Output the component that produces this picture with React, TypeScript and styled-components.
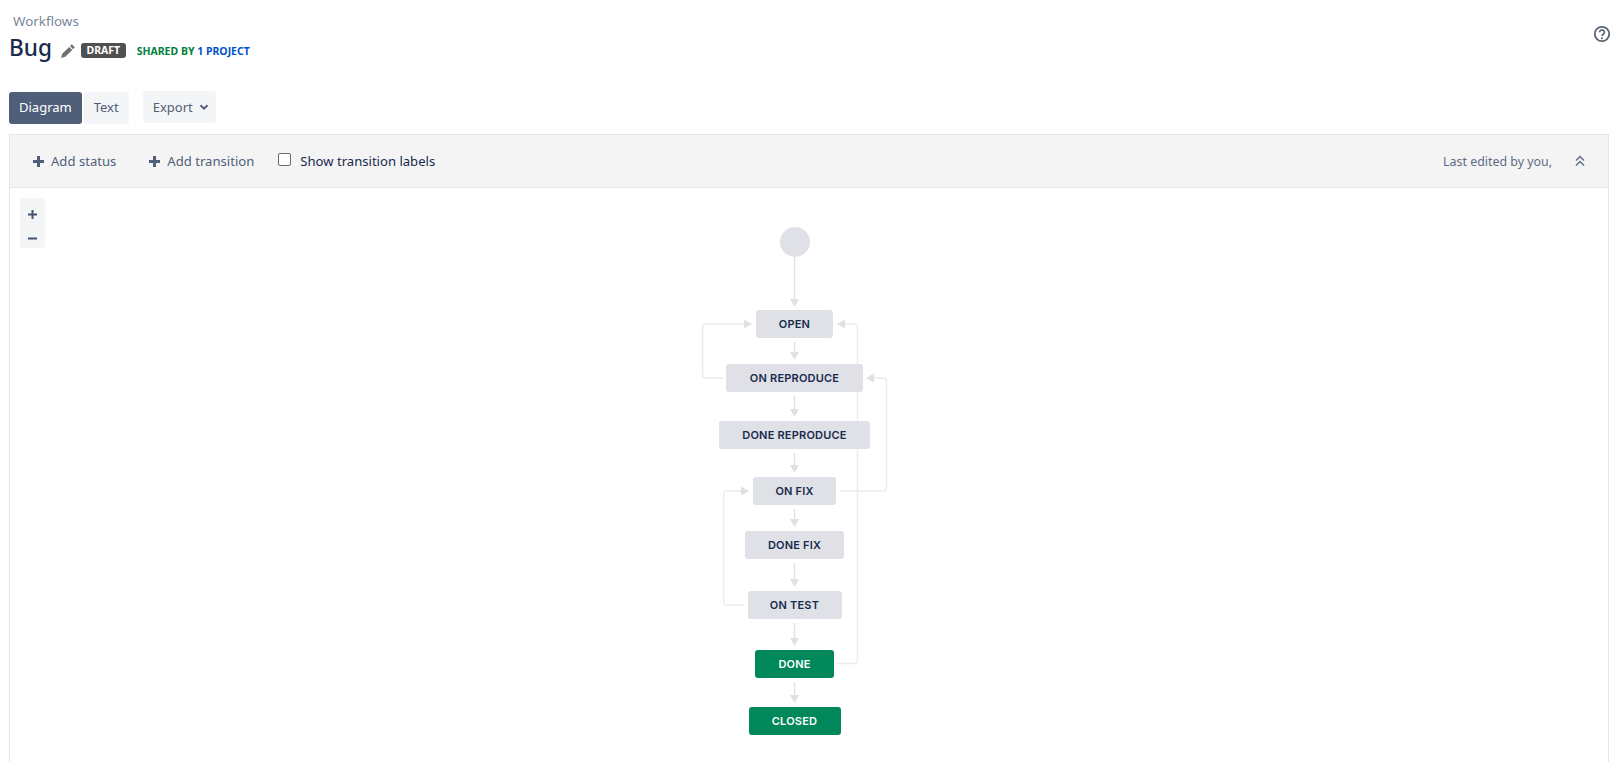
import React from "react";
import styled, { createGlobalStyle } from "styled-components";

const Global = createGlobalStyle`
  html, body { margin: 0; padding: 0; background: #fff; overflow: hidden; }
  body { font-family: "Noto Sans", "Open Sans", sans-serif; font-size: 13px; color: #172b4d; }
`;

const Page = styled.div`
  height: 762px;
  overflow: hidden;
  display: flex;
  flex-direction: column;
  padding: 0 11px 0 9px;
  box-sizing: border-box;
`;

const Header = styled.header`
  display: flex;
  justify-content: space-between;
  height: 91px;
`;

const Crumb = styled.div`
  font-size: 13.4px;
  line-height: 18px;
  color: #7a869a;
  padding: 12px 0 0 4px;
`;

const TitleRow = styled.div`
  display: flex;
  align-items: center;
  height: 30px;
  margin-top: 3px;
`;

const Title = styled.h1`
  margin: 0;
  font-size: 22.6px;
  line-height: 30px;
  font-weight: 500;
  color: #172b4d;
`;

const EditIcon = styled.svg`
  width: 14px;
  height: 14px;
  margin: 6px 0 0 9px;
  fill: #707070;
`;

const Draft = styled.span`
  margin: 5px 0 0 6px;
  height: 15px;
  padding: 0 5.500px;
  border-radius: 3px;
  background: #505050;
  color: #fff;
  font-size: 10.5px;
  font-weight: 700;
  line-height: 15px;
`;

const Shared = styled.span`
  margin: 5px 0 0 11px;
  font-size: 10.5px;
  font-weight: 700;
  color: #00803a;
`;

const Projects = styled.span`
  color: #0052cc;
`;

const Help = styled.svg`
  width: 18px;
  height: 18px;
  margin: 25px 0 0 0;
  position: relative;
  left: 2px;
  fill: none;
  stroke: #5a6472;
`;

const Tabs = styled.nav`
  display: flex;
  align-items: flex-start;
  height: 43px;
`;

const Tab = styled.button<{ $active?: boolean }>`
  height: 32px;
  margin-top: 1px;
  margin-right: 2px;
  padding: 0 10px 2px;
  border: 0;
  border-radius: 3px;
  font: 13px "Noto Sans", sans-serif;
  background: ${(p) => (p.$active ? "#505f79" : "#f4f5f7")};
  color: ${(p) => (p.$active ? "#ffffff" : "#505f79")};
`;

const Export = styled.button`
  display: flex;
  align-items: center;
  gap: 6px;
  height: 32px;
  margin-left: 12px;
  padding: 0 7px 0 10px;
  border: 0;
  border-radius: 3px;
  font: 13px "Noto Sans", sans-serif;
  background: #f4f5f7;
  color: #505f79;
`;

const Panel = styled.section`
  flex: 1;
  border: 1px solid #e6e6e6;
  border-bottom: 0;
  display: flex;
  flex-direction: column;
`;

const Toolbar = styled.div`
  height: 52px;
  flex: none;
  display: flex;
  align-items: center;
  background: #f4f4f5;
  border-bottom: 1px solid #e6e6e6;
  padding: 0 22px 0 23px;
  font-size: 13.1px;
`;

const ToolAction = styled.span`
  display: flex;
  align-items: center;
  gap: 7px;
  color: #505f79;
  margin-right: 33px;
`;

const Check = styled.label`
  display: flex;
  align-items: center;
  gap: 9px;
  margin-left: -9px;
  color: #172b4d;
`;

const CheckBox = styled.span`
  width: 11px;
  height: 11px;
  border: 1px solid #6b6b6b;
  border-radius: 2px;
  background: #fff;
  margin-top: -3px;
`;

const Edited = styled.span`
  margin-left: auto;
  color: #5e6c84;
  font-size: 12.4px;
`;

const Collapse = styled.span`
  display: flex;
  margin-left: 22px;
  color: #5e6c84;
`;

const Canvas = styled.div`
  position: relative;
  flex: 1;
`;

const Zoom = styled.div`
  position: absolute;
  left: 10px;
  top: 10px;
  width: 25px;
  height: 50px;
  box-sizing: border-box;
  padding-top: 4px;
  border-radius: 3px;
  background: #f4f5f7;
  display: grid;
  grid-template-rows: 24px 24px;
  place-items: center;
  color: #42526e;
`;

const Wires = styled.svg`
  position: absolute;
  left: -10px;
  top: -188px;
  width: 1620px;
  height: 762px;
`;

const Start = styled.div`
  position: absolute;
  width: 30px;
  height: 30px;
  border-radius: 50%;
  background: #dfe1e6;
`;

const Node = styled.div<{ $done?: boolean }>`
  position: absolute;
  height: 28px;
  box-sizing: border-box;
  border-radius: 3px;
  display: flex;
  align-items: center;
  justify-content: center;
  font-family: Inter, "Liberation Sans", sans-serif;
  font-size: 11px;
  font-weight: 600;
  letter-spacing: 0.2px;
  background: ${(p) => (p.$done ? "#00875a" : "#dfe1e6")};
  color: ${(p) => (p.$done ? "#ffffff" : "#172b4d")};
`;

const nodes = [
  { label: "OPEN", x1: 756, x2: 833, y: 310 },
  { label: "ON REPRODUCE", x1: 726, x2: 863, y: 364 },
  { label: "DONE REPRODUCE", x1: 719, x2: 870, y: 421 },
  { label: "ON FIX", x1: 753, x2: 836, y: 477 },
  { label: "DONE FIX", x1: 745, x2: 844, y: 531 },
  { label: "ON TEST", x1: 747.5, x2: 841.5, y: 591 },
  { label: "DONE", x1: 755, x2: 834, y: 650, done: true },
  { label: "CLOSED", x1: 748.5, x2: 840.5, y: 707, done: true },
];

const CX = 794.5;
const downs: [number, number][] = [
  [257, 307],
  [342, 360],
  [396, 417],
  [453, 473],
  [509, 527],
  [563, 587],
  [623, 646],
  [682, 703],
];

const W = "#ebecf0";
const H = "#dfe1e6";

function Plus() {
  return (
    <svg width="11" height="11" viewBox="0 0 11 11" fill="#505f79">
      <path d="M4 0h3v4h4v3H7v4H4V7H0V4h4z" />
    </svg>
  );
}

export default function App() {
  return (
    <Page>
      <Global />
      <Header>
        <div>
          <Crumb>Workflows</Crumb>
          <TitleRow>
            <Title>Bug</Title>
            <EditIcon viewBox="0 0 14 14">
              <path d="M10.800.3l3 3-1.700 1.900-3.100-3.100zM8.200 2.900l3.100 3.100-7 6.800-4.200 1.100 1.100-4.100z" />
            </EditIcon>
            <Draft>DRAFT</Draft>
            <Shared>
              SHARED BY <Projects>1 PROJECT</Projects>
            </Shared>
          </TitleRow>
        </div>
        <Help viewBox="0 0 18 18">
          <circle cx="9" cy="9" r="7.200" strokeWidth="1.800" />
          <path d="M6.600 7.200a2.400 2.300 0 1 1 3.600 2c-.8.5-1.200.9-1.200 1.800" strokeWidth="1.700" />
          <circle cx="9" cy="13.200" r=".5" strokeWidth="1.100" />
        </Help>
      </Header>
      <Tabs>
        <Tab $active>Diagram</Tab>
        <Tab>Text</Tab>
        <Export>
          Export
          <svg width="10" height="10" viewBox="0 0 10 10" fill="none" stroke="#505f79" strokeWidth="2">
            <path d="M1.500 3.200L5 6.700l3.500-3.500" />
          </svg>
        </Export>
      </Tabs>
      <Panel>
        <Toolbar>
          <ToolAction>
            <Plus />
            Add status
          </ToolAction>
          <ToolAction>
            <Plus />
            Add transition
          </ToolAction>
          <Check>
            <CheckBox />
            Show transition labels
          </Check>
          <Edited>Last edited by you,</Edited>
          <Collapse>
            <svg width="12" height="14" viewBox="0 0 12 14" fill="none" stroke="#5e6c84" strokeWidth="1.500">
              <path d="M2 6.500L6 2.500l4 4M2 11.500L6 7.500l4 4" />
            </svg>
          </Collapse>
        </Toolbar>
        <Canvas>
          <Zoom>
            <svg width="9" height="9" viewBox="0 0 9 9" fill="#42526e">
              <path d="M3.500 0h2v3.500H9v2H5.500V9h-2V5.500H0v-2h3.500z" />
            </svg>
            <svg width="9" height="9" viewBox="0 0 9 9" fill="#42526e">
              <path d="M0 3.500h9v2H0z" />
            </svg>
          </Zoom>
          <Wires viewBox="0 0 1620 762" fill="none">
            {downs.map(([a, b]) => (
              <g key={a}>
                <path d={`M${CX} ${a}V${b - 6}`} stroke={H} strokeWidth="1.400" />
                <path d={`M${CX - 4.5} ${b - 8}H${CX + 4.5}L${CX} ${b}z`} fill={H} />
              </g>
            ))}
            <g stroke={W} strokeWidth="1.500">
              <path d="M723 378H706q-3.300 0-3.300-3.300V327.300q0-3.300 3.300-3.300H745" />
              <path d="M837 663.500H854q3.500 0 3.500-3.500V327.500q0-3.500-3.500-3.500H844" />
              <path d="M840 491H883q3.500 0 3.500-3.500V381.500q0-3.500-3.500-3.500H873" />
              <path d="M744 605H727q-3.300 0-3.300-3.300V494.300q0-3.300 3.300-3.300H742" />
            </g>
            <g fill={H}>
              <path d="M744 319.500V328.500L752 324z" />
              <path d="M845 319.500V328.500L837 324z" />
              <path d="M874 373.500V382.500L866 378z" />
              <path d="M741 486.500V495.500L749 491z" />
            </g>
          </Wires>
          <Start style={{ left: 769.5, top: 39 }} />
          {nodes.map((n) => (
            <Node
              key={n.label}
              $done={n.done}
              style={{ left: n.x1 - 10, top: n.y - 188, width: n.x2 - n.x1 }}
            >
              {n.label}
            </Node>
          ))}
        </Canvas>
      </Panel>
    </Page>
  );
}
